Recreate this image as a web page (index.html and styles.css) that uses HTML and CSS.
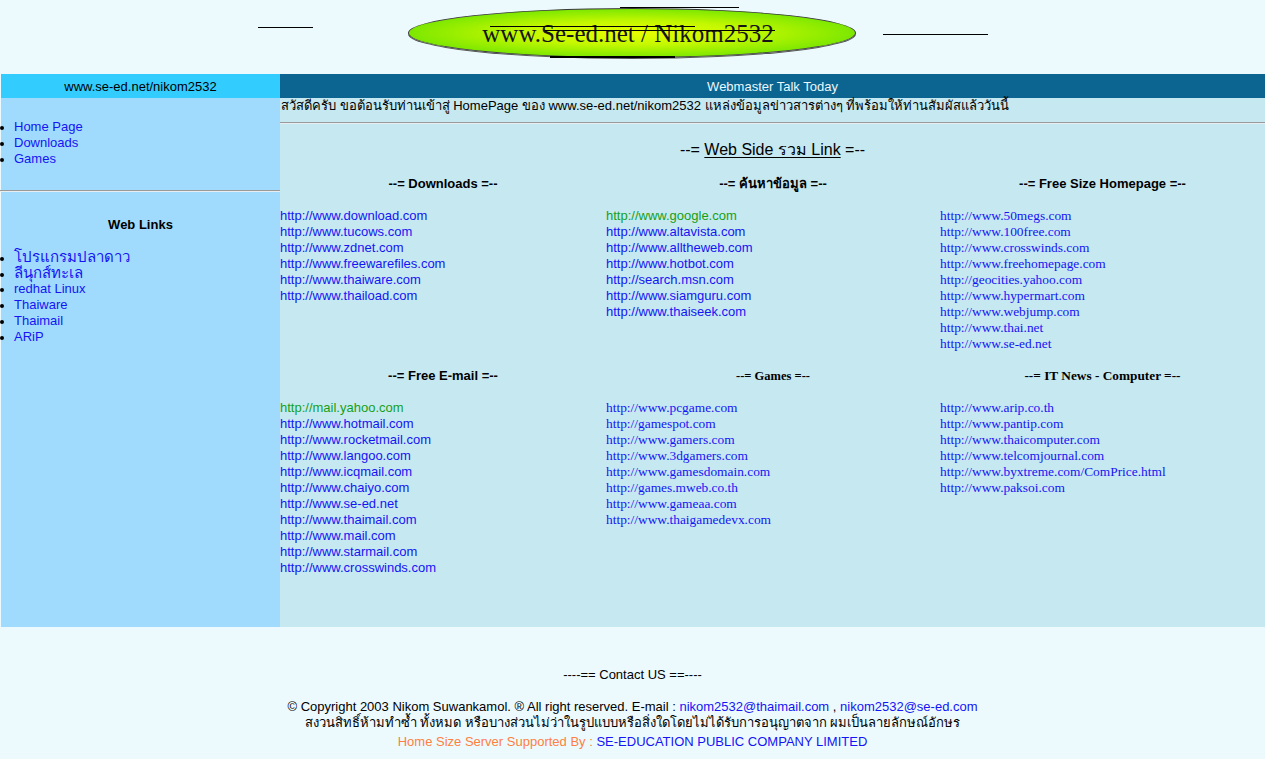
FILE: index.html
```html
<!DOCTYPE html>
<html lang="th">
<head>
<meta charset="utf-8">
<title>www.Se-ed.net / Nikom2532</title>
<link rel="stylesheet" href="styles.css">
</head>
<body>
<header class="banner">
  <span class="rule r1"></span>
  <span class="rule r2"></span>
  <span class="rule r3"></span>
  <div class="oval"><span class="oval-text">www.Se-ed.net / Nikom2532</span></div>
  <span class="rule r4"></span>
  <span class="rule r5"></span>
  <span class="rule r6"></span>
</header>

<div class="layout">
  <aside class="side">
    <div class="side-head">www.se-ed.net/nikom2532</div>
    <ul class="nav first">
      <li><a href="#">Home Page</a></li>
      <li><a href="#">Downloads</a></li>
      <li><a href="#">Games</a></li>
    </ul>
    <hr class="sep side-sep">
    <h3 class="side-title">Web Links</h3>
    <ul class="nav">
      <li class="thai"><a href="#">โปรแกรมปลาดาว</a></li>
      <li class="thai"><a href="#">ลีนุกส์ทะเล</a></li>
      <li><a href="#">redhat Linux</a></li>
      <li><a href="#">Thaiware</a></li>
      <li><a href="#">Thaimail</a></li>
      <li><a href="#">ARiP</a></li>
    </ul>
  </aside>

  <main class="main">
    <div class="main-head">Webmaster Talk Today</div>
    <p class="welcome">สวัสดีครับ ขอต้อนรับท่านเข้าสู่ HomePage ของ www.se-ed.net/nikom2532 แหล่งข้อมูลข่าวสารต่างๆ ที่พร้อมให้ท่านสัมผัสแล้ววันนี้</p>
    <hr class="sep">
    <h2 class="title">--= <u>Web Side รวม Link</u> =--</h2>

    <div class="grid">
      <section class="cell">
        <h4 class="cell-head">--= Downloads =--</h4>
        <ul class="links">
          <li><a href="#">http://www.download.com</a></li>
          <li><a href="#">http://www.tucows.com</a></li>
          <li><a href="#">http://www.zdnet.com</a></li>
          <li><a href="#">http://www.freewarefiles.com</a></li>
          <li><a href="#">http://www.thaiware.com</a></li>
          <li><a href="#">http://www.thaiload.com</a></li>
        </ul>
      </section>
      <section class="cell">
        <h4 class="cell-head">--= ค้นหาข้อมูล =--</h4>
        <ul class="links">
          <li><a class="visited" href="#">http://www.google.com</a></li>
          <li><a href="#">http://www.altavista.com</a></li>
          <li><a href="#">http://www.alltheweb.com</a></li>
          <li><a href="#">http://www.hotbot.com</a></li>
          <li><a href="#">http://search.msn.com</a></li>
          <li><a href="#">http://www.siamguru.com</a></li>
          <li><a href="#">http://www.thaiseek.com</a></li>
        </ul>
      </section>
      <section class="cell">
        <h4 class="cell-head">--= Free Size Homepage =--</h4>
        <ul class="links serif">
          <li><a href="#">http://www.50megs.com</a></li>
          <li><a href="#">http://www.100free.com</a></li>
          <li><a href="#">http://www.crosswinds.com</a></li>
          <li><a href="#">http://www.freehomepage.com</a></li>
          <li><a href="#">http://geocities.yahoo.com</a></li>
          <li><a href="#">http://www.hypermart.com</a></li>
          <li><a href="#">http://www.webjump.com</a></li>
          <li><a href="#">http://www.thai.net</a></li>
          <li><a href="#">http://www.se-ed.net</a></li>
        </ul>
      </section>

      <section class="cell">
        <h4 class="cell-head">--= Free E-mail =--</h4>
        <ul class="links">
          <li><a class="visited" href="#">http://mail.yahoo.com</a></li>
          <li><a href="#">http://www.hotmail.com</a></li>
          <li><a href="#">http://www.rocketmail.com</a></li>
          <li><a href="#">http://www.langoo.com</a></li>
          <li><a href="#">http://www.icqmail.com</a></li>
          <li><a href="#">http://www.chaiyo.com</a></li>
          <li><a href="#">http://www.se-ed.net</a></li>
          <li><a href="#">http://www.thaimail.com</a></li>
          <li><a href="#">http://www.mail.com</a></li>
          <li><a href="#">http://www.starmail.com</a></li>
          <li><a href="#">http://www.crosswinds.com</a></li>
        </ul>
      </section>
      <section class="cell">
        <h4 class="cell-head serif-head small">--= Games =--</h4>
        <ul class="links serif">
          <li><a href="#">http://www.pcgame.com</a></li>
          <li><a href="#">http://gamespot.com</a></li>
          <li><a href="#">http://www.gamers.com</a></li>
          <li><a href="#">http://www.3dgamers.com</a></li>
          <li><a href="#">http://www.gamesdomain.com</a></li>
          <li><a href="#">http://games.mweb.co.th</a></li>
          <li><a href="#">http://www.gameaa.com</a></li>
          <li><a href="#">http://www.thaigamedevx.com</a></li>
        </ul>
      </section>
      <section class="cell">
        <h4 class="cell-head serif-head">--= IT News - Computer =--</h4>
        <ul class="links serif">
          <li><a href="#">http://www.arip.co.th</a></li>
          <li><a href="#">http://www.pantip.com</a></li>
          <li><a href="#">http://www.thaicomputer.com</a></li>
          <li><a href="#">http://www.telcomjournal.com</a></li>
          <li><a href="#">http://www.byxtreme.com/ComPrice.html</a></li>
          <li><a href="#">http://www.paksoi.com</a></li>
        </ul>
      </section>
    </div>
  </main>
</div>

<footer class="footer">
  <p class="contact">----== Contact US ==----</p>
  <p class="line">© Copyright 2003 Nikom Suwankamol. ® All right reserved. E-mail : <a href="#">nikom2532@thaimail.com</a> , <a href="#">nikom2532@se-ed.com</a></p>
  <p class="line">สงวนสิทธิ์ห้ามทำซ้ำ ทั้งหมด หรือบางส่วนไม่ว่าในรูปแบบหรือสิ่งใดโดยไม่ได้รับการอนุญาตจาก ผมเป็นลายลักษณ์อักษร</p>
  <p class="line support"><span class="orange">Home Size Server Supported By : </span><a href="#">SE-EDUCATION PUBLIC COMPANY LIMITED</a></p>
</footer>
</body>
</html>
```

FILE: styles.css
```css
html, body {
  margin: 0;
  padding: 0;
}
body {
  background: #ecfafe;
  font-family: "Liberation Sans", Arial, sans-serif;
  font-size: 13px;
  line-height: 16px;
  color: #000;
}
a {
  color: #1414f5;
  text-decoration: none;
}
a.visited {
  color: #16a016;
}

/* banner */
.banner {
  position: relative;
  height: 74px;
}
.oval {
  position: absolute;
  left: 408px;
  top: 8px;
  width: 446px;
  height: 48px;
  border: 1px solid #3a3a3a;
  border-radius: 50%;
  background: radial-gradient(ellipse at center, #e8ff00 0%, #c4f800 35%, #7fe800 70%, #2ddc00 100%);
  box-shadow: 0 1px 0 #555;
  display: flex;
  align-items: center;
  justify-content: center;
}
.oval-text {
  font-family: "Liberation Serif", "Times New Roman", serif;
  font-size: 25px;
  line-height: 28px;
  color: #151515;
  margin-left: -8px;
  margin-top: 2px;
}
.rule {
  position: absolute;
  height: 1px;
  background: #000;
  z-index: 2;
}
.r1 { left: 258px; top: 27px; width: 55px; }
.r2 { left: 620px; top: 7px; width: 119px; }
.r3 { left: 883px; top: 34px; width: 105px; }
.r4 { left: 490px; top: 26px; width: 205px; }
.r5 { left: 545px; top: 30px; width: 230px; }
.r6 { left: 550px; top: 56px; width: 125px; height: 2px; }

/* layout */
.layout {
  display: flex;
  padding-left: 1px;
}
.side {
  width: 279px;
  flex: none;
  background: #a0dbfe;
  padding-bottom: 20px;
}
.side-head {
  background: #33ccff;
  height: 24px;
  line-height: 25px;
  text-align: center;
}
.nav {
  list-style: disc;
  margin: 0;
  padding: 0 0 0 13px;
}
.nav.first {
  margin-top: 21px;
  margin-bottom: 23px;
}
.nav li {
  height: 16px;
  line-height: 16px;
}
.nav li::marker {
  font-size: 12px;
}
.nav li.thai a {
  font-size: 15px;
  line-height: 16px;
}
.sep {
  margin: 0;
  border: 0;
  border-top: 1px solid #9a9a9a;
  border-bottom: 1px solid #e6eef2;
  height: 0;
}
.side-sep {
  margin-left: -1px;
}
.side-title {
  margin: 25px 0 16px;
  font-size: 13px;
  line-height: 16px;
  text-align: center;
}

.main {
  flex: 1;
  background: #c6e8f1;
  padding-bottom: 35px;
}
.main-head {
  background: #0b6590;
  color: #eaf8ff;
  height: 24px;
  line-height: 25px;
  text-align: center;
}
.welcome {
  margin: 0 0 8px;
  padding-left: 1px;
  line-height: 16px;
}
.title {
  margin: 16px 0 16px;
  font-size: 16px;
  line-height: 20px;
  font-weight: normal;
  text-align: center;
}
.title u {
  text-decoration-thickness: 1px;
  text-underline-offset: 2px;
}

.grid {
  display: grid;
  grid-template-columns: 326px 334px 1fr;
}
.cell {
  padding-bottom: 16px;
}
.cell-head {
  margin: 0 0 16px;
  font-size: 13px;
  line-height: 16px;
  text-align: center;
}
.serif-head {
  font-family: "Liberation Serif", "Times New Roman", serif;
  font-size: 13.3px;
}
.serif-head.small {
  font-size: 12.5px;
}
.links {
  list-style: none;
  margin: 0;
  padding: 0;
}
.links li {
  height: 16px;
  white-space: nowrap;
}
.links.serif {
  font-family: "Liberation Serif", "Times New Roman", serif;
  font-size: 13.4px;
}

/* footer */
.footer {
  text-align: center;
  padding-top: 40px;
  padding-bottom: 8px;
}
.footer p {
  margin: 0;
  line-height: 16px;
}
.contact {
  margin-bottom: 16px !important;
}
.support {
  margin-top: 3px !important;
}
.orange {
  color: #ff7f40;
}
```
